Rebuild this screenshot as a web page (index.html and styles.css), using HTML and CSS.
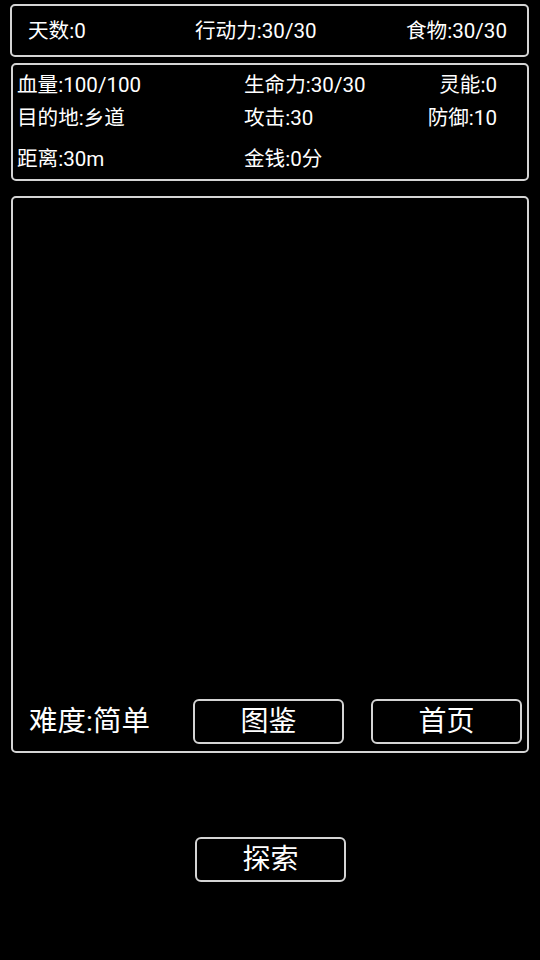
FILE: index.html
```html
<!DOCTYPE html>
<html>
<head>
    <meta charset="UTF-8">
    <meta name="viewport" content="width=device-width, initial-scale=1.0">
    <title>探索</title>
    <link rel="stylesheet" href="styles.css">
</head>
<body>
    <div class="game">
        <div class="box top-bar">
            <span>天数:0</span>
            <span>行动力:30/30</span>
            <span>食物:30/30</span>
        </div>
        <div class="box stats">
            <div class="row row1">
                <span>血量:100/100</span>
                <span>生命力:30/30</span>
                <span class="right">灵能:0</span>
            </div>
            <div class="row row2">
                <span>目的地:乡道</span>
                <span>攻击:30</span>
                <span class="right">防御:10</span>
            </div>
            <div class="row row3">
                <span>距离:30m</span>
                <span>金钱:0分</span>
                <span></span>
            </div>
        </div>
        <div class="box log">
            <div class="log-bottom">
                <span class="level">难度:简单</span>
                <button class="btn">图鉴</button>
                <button class="btn">首页</button>
            </div>
        </div>
        <div class="explore">
            <button class="btn">探索</button>
        </div>
    </div>
</body>
</html>
```

FILE: styles.css
```css
html, body {
    margin: 0;
    background: #000;
}
body {
    font-family: Roboto, "Noto Sans CJK SC", sans-serif;
    color: #fff;
    width: 540px;
    height: 960px;
}
.game {
    padding: 4px 11px 0 10px;
}
.box {
    border: 2px solid #d4d4d4;
    border-radius: 5px;
    box-sizing: border-box;
}
.top-bar {
    height: 53px;
    display: grid;
    grid-template-columns: 167px 1fr auto;
    align-items: center;
    padding: 0 20px 3px 16px;
    font-size: 20.6px;
}
.stats {
    margin: 6px 0 0 1px;
    height: 118px;
    padding: 0 30px 0 4px;
    font-size: 20.6px;
}
.row {
    display: grid;
    grid-template-columns: 227px 1fr auto;
    align-items: center;
    height: 24px;
}
.row1 {
    margin-top: 3px;
}
.row2 {
    margin-top: 9px;
}
.row3 {
    margin-top: 17px;
}
.right {
    text-align: right;
}
.log {
    margin: 15px 0 0 1px;
    height: 557px;
    display: flex;
    flex-direction: column;
    justify-content: flex-end;
}
.log-bottom {
    display: flex;
    align-items: center;
    padding: 0 4px 7px 16px;
}
.level {
    font-size: 28.5px;
    width: 164px;
    margin-top: -6px;
}
.btn {
    width: 151px;
    height: 45px;
    background: #000;
    color: #fff;
    border: 2px solid #d4d4d4;
    border-radius: 6px;
    font-family: "Noto Sans CJK SC", sans-serif;
    font-size: 28px;
    line-height: 1;
    padding: 0 0 5px 0;
}
.log-bottom .btn + .btn {
    margin-left: 27px;
}
.explore {
    display: flex;
    justify-content: center;
    margin-top: 84px;
    padding-left: 2px;
}
```
